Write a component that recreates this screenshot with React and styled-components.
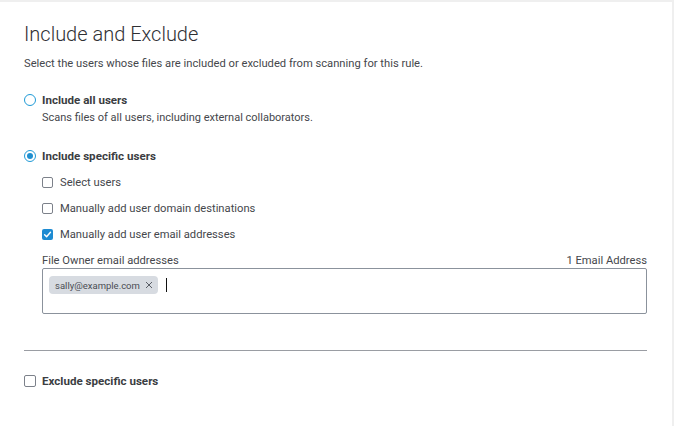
import React from "react";
import styled, { createGlobalStyle } from "styled-components";

const Global = createGlobalStyle`
  html, body { margin: 0; padding: 0; background: #efefef; }
  body { font-family: Roboto, "Liberation Sans", sans-serif; color: #39393b; }
  #root { height: 426px; }
`;

const Card = styled.div`
  margin-top: 2px;
  width: 672px;
  height: 424px;
  box-sizing: border-box;
  background: #fff;
  padding: 19px 25px 0 24px;
`;

const Title = styled.h1`
  margin: 0;
  font-size: 20px;
  font-weight: 300;
  line-height: 26px;
  color: #2f3034;
`;

const Subtitle = styled.p`
  margin: 10px 0 0;
  font-size: 11.2px;
  line-height: 14px;
  color: #45474c;
`;

const OptionRow = styled.label`
  display: flex;
  align-items: center;
  gap: ${(p) => (p.$bold ? 6 : 7)}px;
  margin-top: ${(p) => p.$mt || 0}px;
  height: 16px;
  font-size: ${(p) => (p.$bold ? 11.6 : 11.2)}px;
  font-weight: ${(p) => (p.$bold ? 700 : 400)};
  color: ${(p) => (p.$bold ? "#3b3d42" : "#45474c")};
`;

const Radio = styled.span`
  width: 12px;
  height: 12px;
  box-sizing: border-box;
  border-radius: 50%;
  border: 1.5px solid #1f9ad6;
  display: inline-flex;
  align-items: center;
  justify-content: center;
  flex: none;
  &::after {
    content: "";
    width: 6px;
    height: 6px;
    border-radius: 50%;
    background: ${(p) => (p.$checked ? "#1f8fd0" : "transparent")};
  }
`;

const Box = styled.span`
  width: ${(p) => p.$size || 11}px;
  height: ${(p) => p.$size || 11}px;
  box-sizing: border-box;
  border-radius: 2px;
  border: ${(p) => (p.$checked ? "none" : "1.3px solid #7c818a")};
  background: ${(p) => (p.$checked ? "#1d8bd2" : "#fff")};
  display: inline-flex;
  align-items: center;
  justify-content: center;
  flex: none;
`;

const Description = styled.div`
  margin: 3px 0 0 18px;
  font-size: 11px;
  line-height: 14px;
  color: #45474c;
`;

const Nested = styled.div`
  margin-left: 18px;
`;

const FieldHeader = styled.div`
  display: flex;
  justify-content: space-between;
  margin-top: 12px;
  font-size: 11.2px;
  line-height: 14px;
  color: #45474c;
`;

const InputBox = styled.div`
  margin-top: 0;
  height: 46px;
  box-sizing: border-box;
  border: 1px solid #8b929c;
  border-radius: 2px;
  padding: 7px 6px;
  display: flex;
  align-items: flex-start;
  gap: 8px;
`;

const Chip = styled.span`
  display: inline-flex;
  align-items: center;
  gap: 5px;
  height: 18px;
  padding: 0 5px 0 6px;
  background: #d7dbe1;
  border-radius: 4px;
  font-size: 9.5px;
  color: #4a4d53;
`;

const Caret = styled.span`
  width: 1px;
  height: 14px;
  margin-top: 2px;
  background: #111;
`;

const Divider = styled.hr`
  margin: 36px 0 0;
  border: none;
  border-top: 1px solid #9a9da3;
`;

const Check = () => (
  <svg width="9" height="9" viewBox="0 0 10 10">
    <path d="M1.8 5.2 L4 7.4 L8.3 2.6" fill="none" stroke="#fff" strokeWidth="1.6" strokeLinecap="round" strokeLinejoin="round" />
  </svg>
);

const XIcon = () => (
  <svg width="8" height="8" viewBox="0 0 8 8">
    <path d="M1 1 L7 7 M7 1 L1 7" stroke="#5a5e66" strokeWidth="1" />
  </svg>
);

export default function App() {
  return (
    <>
      <Global />
      <Card>
        <Title>Include and Exclude</Title>
        <Subtitle>Select the users whose files are included or excluded from scanning for this rule.</Subtitle>

        <OptionRow $bold $mt={21}>
          <Radio />
          Include all users
        </OptionRow>
        <Description>Scans files of all users, including external collaborators.</Description>

        <OptionRow $bold $mt={23}>
          <Radio $checked />
          Include specific users
        </OptionRow>

        <Nested>
          <OptionRow $mt={10}>
            <Box />
            Select users
          </OptionRow>
          <OptionRow $mt={10}>
            <Box />
            Manually add user domain destinations
          </OptionRow>
          <OptionRow $mt={10}>
            <Box $checked>
              <Check />
            </Box>
            Manually add user email addresses
          </OptionRow>

          <FieldHeader>
            <span>File Owner email addresses</span>
            <span>1 Email Address</span>
          </FieldHeader>
          <InputBox>
            <Chip>
              sally@example.com
              <XIcon />
            </Chip>
            <Caret />
          </InputBox>
        </Nested>

        <Divider />

        <OptionRow $bold $mt={22}>
          <Box $size={12} />
          Exclude specific users
        </OptionRow>
      </Card>
    </>
  );
}
